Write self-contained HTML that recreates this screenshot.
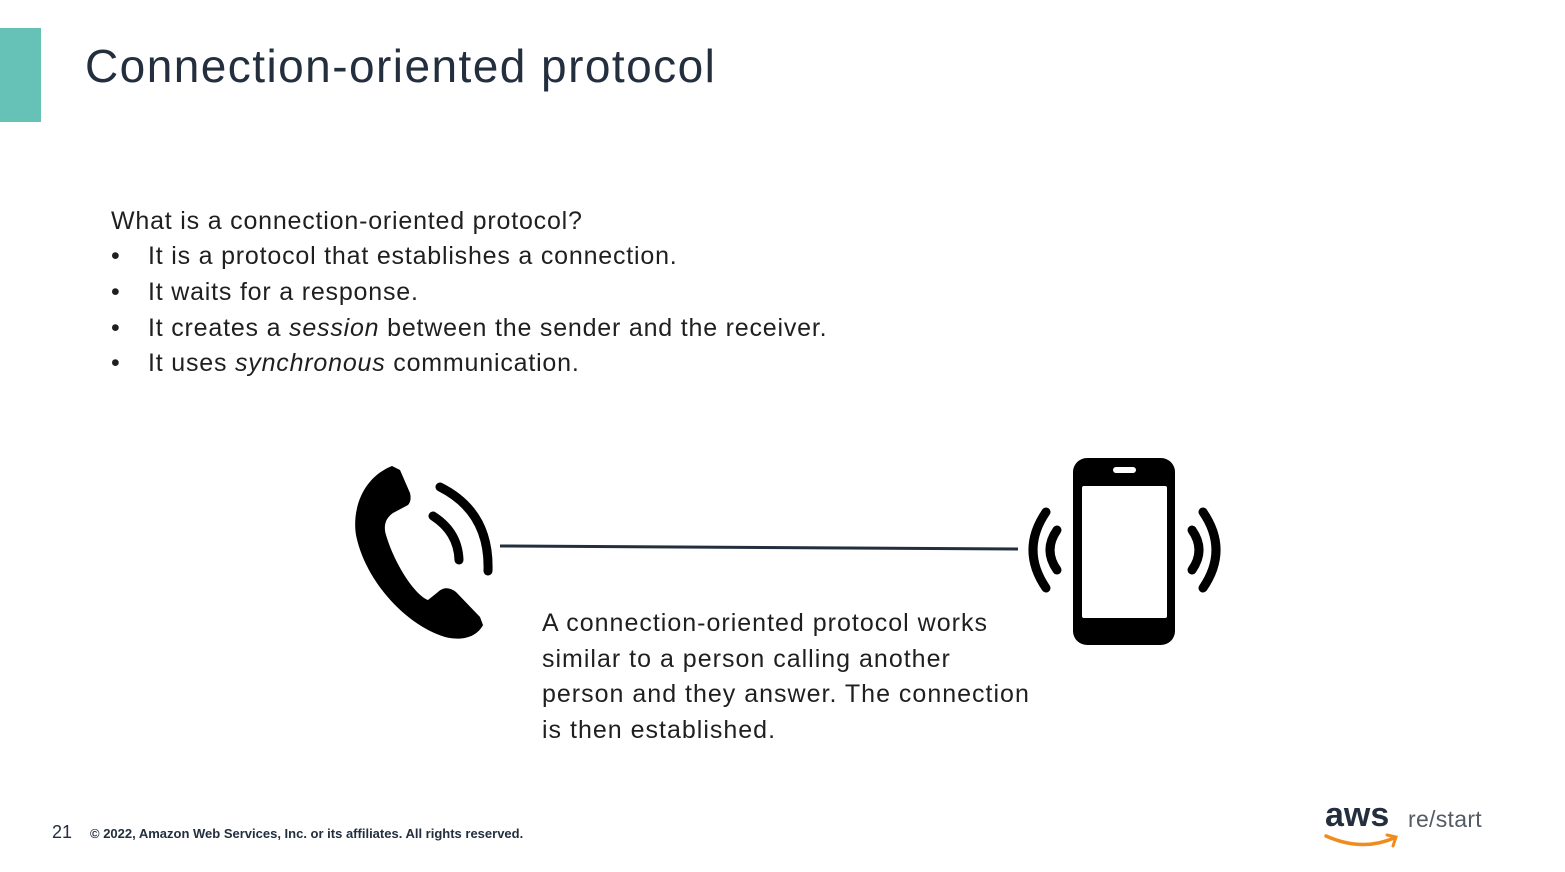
<!DOCTYPE html>
<html><head><meta charset="utf-8"><style>
body{margin:0;width:1565px;height:872px;background:#fff;position:relative;overflow:hidden;font-family:"Liberation Sans",sans-serif;color:#232f3e}
.a{position:absolute;white-space:nowrap}
.bar{position:absolute;left:0;top:28px;width:41px;height:94px;background:#66c2b6}
.t{left:85px;top:39px;font-size:46px;letter-spacing:1.45px}
.b{font-size:25px;color:#1f1f1f;letter-spacing:0.8px}
</style></head><body>
<div class="bar"></div>
<div class="a t">Connection-oriented protocol</div>
<div class="a b" style="left:111px;top:207px">What is a connection-oriented protocol?</div>
<div class="a b" style="left:111px;top:242px">•</div><div class="a b" style="left:148px;top:242px">It is a protocol that establishes a connection.</div>
<div class="a b" style="left:111px;top:278px">•</div><div class="a b" style="left:148px;top:278px">It waits for a response.</div>
<div class="a b" style="left:111px;top:314px">•</div><div class="a b" style="left:148px;top:314px">It creates a <i>session</i> between the sender and the receiver.</div>
<div class="a b" style="left:111px;top:349px">•</div><div class="a b" style="left:148px;top:349px">It uses <i>synchronous</i> communication.</div>
<div class="a b" style="left:542px;top:606px;line-height:35.5px;white-space:normal;width:560px;letter-spacing:1.0px">A connection-oriented protocol works<br>similar to a person calling another<br>person and they answer. The connection<br>is then established.</div>
<svg class="a" style="left:0;top:0" width="1565" height="872">
<path d="M392,466 C362,478 352,510 356,535 C365,580 405,625 445,637 C465,642 478,635 483,625 L480,617 L456,592 C450,587 443,587 438,592 L428,600 C415,595 395,565 386,535 C383,525 386,518 393,513 L408,505 C411,502 411,497 410,493 L400,470 Z" fill="#000"/>
<g fill="none" stroke="#000" stroke-width="9" stroke-linecap="round">
<path d="M433,516 Q458,532 459,560"/>
<path d="M440,487 Q490,512 488,571"/>
<path d="M1046,512 Q1020,550 1046,588"/>
<path d="M1057,530 Q1043,550 1057,570"/>
<path d="M1203,512 Q1229,550 1203,588"/>
<path d="M1192,530 Q1206,550 1192,570"/>
</g>
<line x1="500" y1="546" x2="1018" y2="549" stroke="#232f3e" stroke-width="3"/>
<rect x="1073" y="458" width="102" height="187" rx="14" fill="#000"/>
<rect x="1082" y="486" width="85" height="132" rx="2" fill="#fff"/>
<rect x="1113" y="467" width="23" height="6" rx="3" fill="#fff"/>
<path d="M1326,836 Q1362,852 1394,838" fill="none" stroke="#f08c1e" stroke-width="3.5" stroke-linecap="round"/>
<path d="M1387,835 L1396,837 L1393,846" fill="none" stroke="#f08c1e" stroke-width="3" stroke-linecap="round"/>
</svg>
<div class="a" style="left:1325px;top:796px;font-size:34px;font-weight:bold;letter-spacing:0px;color:#232f3e">aws</div>
<div class="a" style="left:1408px;top:806px;font-size:23px;letter-spacing:0.3px;color:#545b64">re/start</div>
<div class="a" style="left:52px;top:822px;font-size:18px">21</div>
<div class="a" style="left:90px;top:826px;font-size:13px;font-weight:bold;letter-spacing:0px">© 2022, Amazon Web Services, Inc. or its affiliates. All rights reserved.</div>
</body></html>
